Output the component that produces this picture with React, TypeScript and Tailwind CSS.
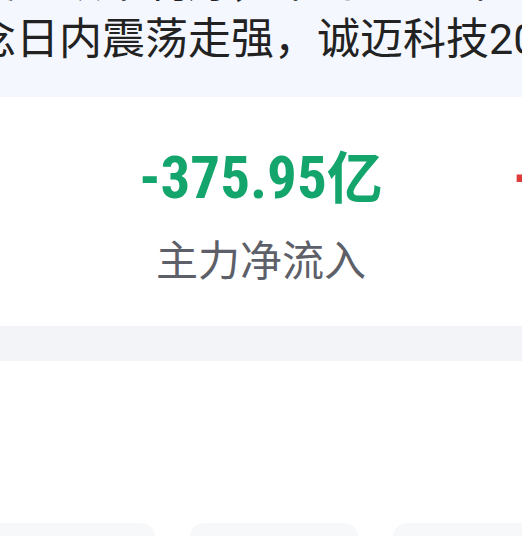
const NEWS_LINES = [
  "受益政策利好，华为2023年鸿蒙概念股",
  "念日内震荡走强，诚迈科技20cm涨停",
];

const FLOWS = [
  { value: "-375.95", unit: "亿", label: "主力净流入", up: false },
  { value: "+239.64", unit: "亿", label: "超大单流入", up: true },
];

const SHORTCUTS = ["龙虎榜", "涨停池", "资金流向"];

function FlowColumn({ value, unit, label, up }: { value: string; unit: string; label: string; up: boolean }) {
  return (
    <div className="w-[372px] shrink-0 flex flex-col items-center">
      <div
        className={`whitespace-nowrap font-bold leading-none ${up ? "text-[#e03b3b]" : "text-[#13a56b]"}`}
      >
        <span className="text-[59px] font-['Roboto_Condensed','Roboto',sans-serif]">{value}</span>
        <span className="text-[56px] font-['Noto_Sans_CJK_SC',sans-serif]">{unit}</span>
      </div>
      <div className="mt-[30px] leading-none text-[42px] text-[#5d6068] whitespace-nowrap font-['Noto_Sans_CJK_SC',sans-serif]">
        {label}
      </div>
    </div>
  );
}

export default function App() {
  return (
    <div className="w-[522px] h-[536px] overflow-hidden bg-white">
      {/* News banner */}
      <div className="h-[97px] bg-[#f4f7fe] overflow-hidden">
        <div className="-ml-[27px] -mt-[46px] text-[43px] leading-[57px] text-[#222222] whitespace-nowrap font-['Roboto','Noto_Sans_CJK_SC',sans-serif]">
          {NEWS_LINES.map((line) => (
            <div key={line}>{line}</div>
          ))}
        </div>
      </div>

      {/* Fund flow */}
      <div className="pt-[49px] pb-[47px] overflow-hidden">
        <div className="flex gap-[7px] pl-[75px]">
          {FLOWS.map((f) => (
            <FlowColumn key={f.label} {...f} />
          ))}
        </div>
      </div>

      <div className="h-[35px] bg-[#f3f4f8]" />

      {/* Shortcut cards */}
      <div className="pt-[162px] overflow-hidden">
        <div className="flex gap-[35px] -ml-[13px]">
          {SHORTCUTS.map((s) => (
            <div key={s} className="w-[168px] h-[80px] shrink-0 rounded-t-[14px] bg-[#f7f8fa]" />
          ))}
        </div>
      </div>
    </div>
  );
}
